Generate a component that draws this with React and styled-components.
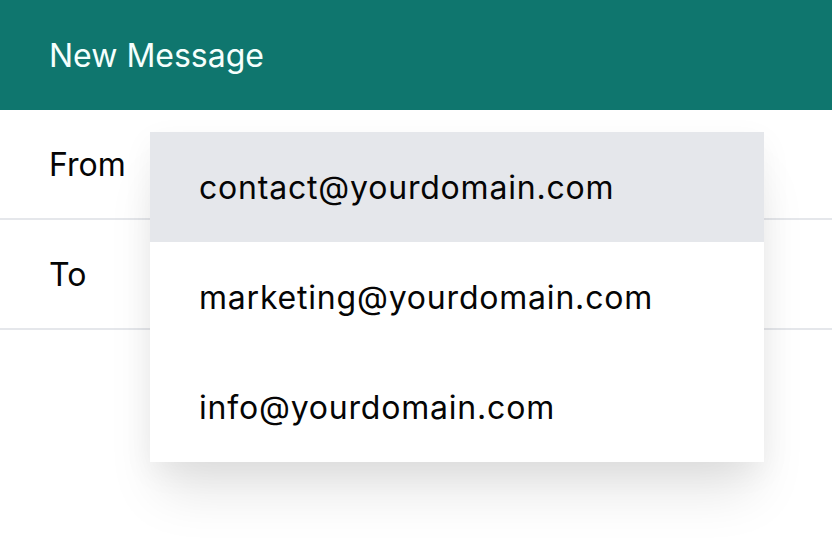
import React from "react";
import styled, { createGlobalStyle } from "styled-components";

const Global = createGlobalStyle`
  html, body { margin: 0; padding: 0; background: #ffffff; }
  body { font-family: Inter, "Noto Sans", sans-serif; -webkit-font-smoothing: antialiased; }
  * { box-sizing: border-box; }
`;

const Page = styled.div`
  position: relative;
  width: 832px;
  height: 540px;
  overflow: hidden;
  background: #ffffff;
`;

const Header = styled.header`
  height: 110px;
  background: #0f766e;
  display: flex;
  align-items: center;
  padding-left: 49px;
  color: #f5fffd;
  font-size: 32px;
  font-weight: 400;
`;

const FieldRow = styled.div`
  height: 110px;
  display: flex;
  align-items: center;
  padding-left: 49px;
  border-bottom: 2px solid #e5e7eb;
  font-size: 32px;
  color: #050505;
`;

const Menu = styled.ul`
  position: absolute;
  left: 150px;
  top: 132px;
  width: 614px;
  margin: 0;
  padding: 0;
  list-style: none;
  background: #ffffff;
  box-shadow: 0 40px 50px -10px rgba(0, 0, 0, 0.1), 0 10px 30px rgba(0, 0, 0, 0.05);
`;

const MenuItem = styled.li`
  height: 110px;
  display: flex;
  align-items: center;
  padding-left: 49px;
  font-size: 32px;
  letter-spacing: 0.8px;
  color: #050505;
  background: ${(p) => (p.$active ? "#e5e7eb" : "#ffffff")};
`;

const options = [
  "contact@yourdomain.com",
  "marketing@yourdomain.com",
  "info@yourdomain.com",
];

export default function App() {
  return (
    <Page>
      <Global />
      <Header>New Message</Header>
      <FieldRow>From</FieldRow>
      <FieldRow>To</FieldRow>
      <Menu>
        {options.map((o, i) => (
          <MenuItem key={o} $active={i === 0}>
            {o}
          </MenuItem>
        ))}
      </Menu>
    </Page>
  );
}
